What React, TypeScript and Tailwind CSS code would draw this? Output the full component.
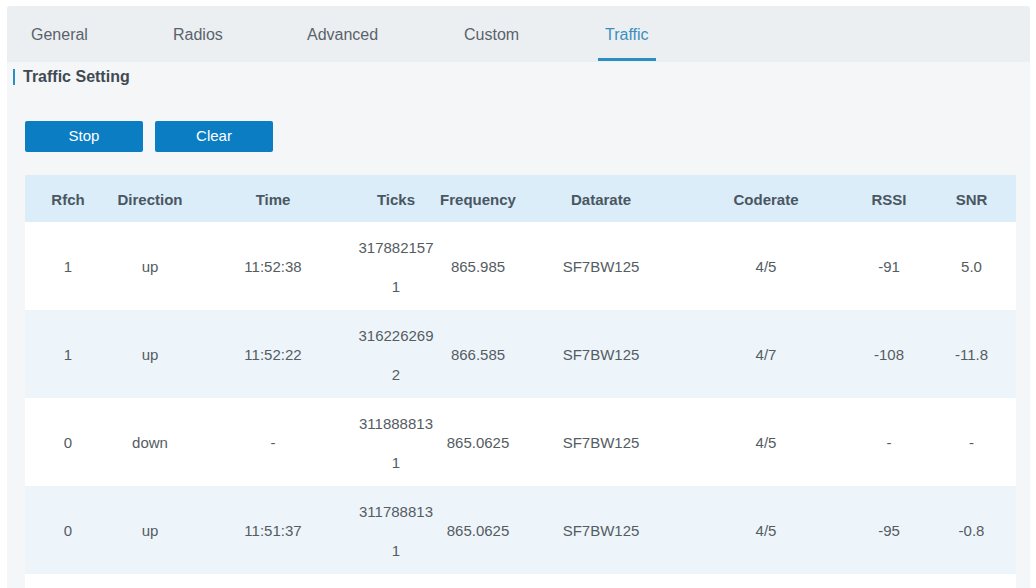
import React from "react";

const cols = [
  { key: "Rfch", w: "w-[86px]" },
  { key: "Direction", w: "w-[78px]" },
  { key: "Time", w: "w-[168px]" },
  { key: "Ticks", w: "w-[78px]" },
  { key: "Frequency", w: "w-[86px]" },
  { key: "Datarate", w: "w-[160px]" },
  { key: "Coderate", w: "w-[170px]" },
  { key: "RSSI", w: "w-[76px]" },
  { key: "SNR", w: "w-[89px]" },
];

const rows = [
  ["1", "up", "11:52:38", ["317882157", "1"], "865.985", "SF7BW125", "4/5", "-91", "5.0"],
  ["1", "up", "11:52:22", ["316226269", "2"], "866.585", "SF7BW125", "4/7", "-108", "-11.8"],
  ["0", "down", "-", ["311888813", "1"], "865.0625", "SF7BW125", "4/5", "-", "-"],
  ["0", "up", "11:51:37", ["311788813", "1"], "865.0625", "SF7BW125", "4/5", "-95", "-0.8"],
];

const tabs = [
  { t: "General", w: "w-[142px]" },
  { t: "Radios", w: "w-[134px]" },
  { t: "Advanced", w: "w-[157px]" },
  { t: "Custom", w: "w-[141px]" },
  { t: "Traffic", w: "w-[58px]" },
];

export default function App() {
  return (
    <div
      className="h-[588px] w-[1036px] overflow-hidden bg-white"
      style={{ fontFamily: '"Liberation Sans", Arial, sans-serif' }}
    >
      <div className="ml-[7px] mt-[6px] w-[1023px] h-[600px] rounded-[3px] bg-[#f4f6f7] overflow-hidden">
        {/* Tabs */}
        <div className="h-[56px] bg-[#eceff1] flex pl-[17px]">
          {tabs.map(({ t, w }) => {
            const active = t === "Traffic";
            return (
              <div
                key={t}
                className={`relative ${w} shrink-0 h-full flex items-center pt-[2px] px-[7px] text-[16px] whitespace-nowrap ${
                  active ? "text-[#3a8fbf]" : "text-[#59636c]"
                }`}
              >
                {t}
                {active && (
                  <div className="absolute left-0 right-0 bottom-[1px] h-[3px] bg-[#2b8ec3]" />
                )}
              </div>
            );
          })}
        </div>

        {/* Heading */}
        <div className="mt-[5px] h-[20px] flex items-center">
          <div className="ml-[6px] w-[2px] h-[16px] bg-[#2b8ec3]" />
          <div className="ml-[8px] text-[16px] font-bold text-[#3f4a54]">Traffic Setting</div>
        </div>

        {/* Buttons */}
        <div className="mt-[34px] pl-[18px] flex gap-[12px]">
          <button className="w-[118px] h-[31px] rounded-[2px] bg-[#0b7dc2] text-white text-[15px]">
            Stop
          </button>
          <button className="w-[118px] h-[31px] rounded-[2px] bg-[#0b7dc2] text-white text-[15px]">
            Clear
          </button>
        </div>

        {/* Table */}
        <div className="mt-[23px] ml-[18px] w-[991px]">
          <div className="h-[47px] flex items-center pt-[3px] bg-[#daedf8]">
            {cols.map((c) => (
              <div
                key={c.key}
                className={`${c.w} shrink-0 text-center text-[15px] font-bold text-[#4a5662]`}
              >
                {c.key}
              </div>
            ))}
          </div>
          {rows.map((r, i) => (
            <div
              key={i}
              className={`h-[88px] flex items-center pt-[2px] ${i % 2 === 0 ? "bg-white" : "bg-[#edf5fb]"}`}
            >
              {r.map((v, j) => (
                <div
                  key={j}
                  className={`${cols[j].w} shrink-0 text-center text-[15px] text-[#555c62] ${
                    Array.isArray(v) ? "leading-[39px]" : ""
                  }`}
                >
                  {Array.isArray(v) ? (
                    <>
                      {v[0]}
                      <br />
                      {v[1]}
                    </>
                  ) : (
                    v
                  )}
                </div>
              ))}
            </div>
          ))}
          <div className="h-[88px] bg-white" />
        </div>
      </div>
    </div>
  );
}
